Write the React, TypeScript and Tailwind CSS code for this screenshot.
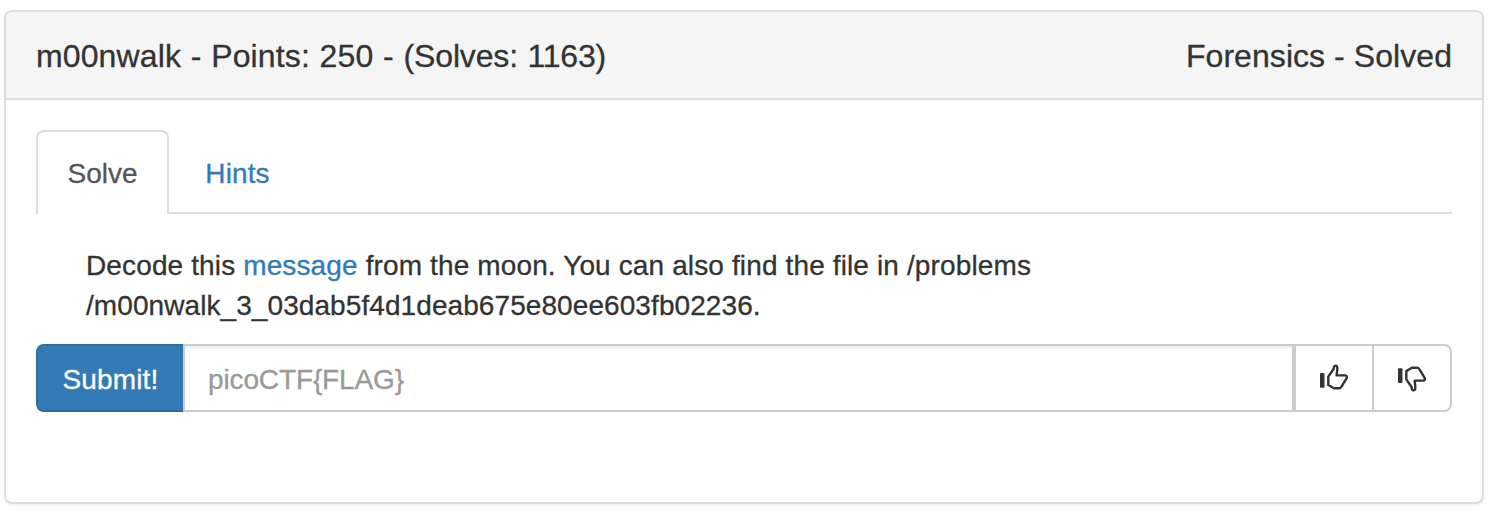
import { useState } from "react";

function Thumb({ down = false }: { down?: boolean }) {
  return (
    <svg width="30" height="28" viewBox="0 0 30 28" fill="none" className={down ? "-scale-y-100" : ""}>
      <rect x="1" y="9" width="4.5" height="14.7" rx="1" fill="#333" />
      <path
        d="M9.3 12.6 L14.6 5 L15.1 2.6 Q16.6 0.8 17.9 2.3 Q18.5 3.3 18.3 5.5 L17.6 11.4 H26.4 Q28.2 11.6 27.8 13.8 L22.8 22.2 Q21.8 24.2 20.2 24.2 H15 L12.4 22.7 L9.3 20.9 Z"
        stroke="#333"
        strokeWidth="2.4"
        strokeLinejoin="round"
      />
    </svg>
  );
}

export default function App() {
  const [flag, setFlag] = useState("");
  return (
    <div className="h-[518px] w-[1500px] bg-white pl-1 pt-[10px] font-['Liberation_Sans',Arial,sans-serif] text-[#333] [-webkit-text-stroke:0.3px]">
      <section className="h-[494px] w-[1480px] rounded-lg border-2 border-[#ddd] bg-white shadow-[0_2px_2px_rgba(0,0,0,0.05)]">
        <header className="flex h-[88px] items-center justify-between rounded-t-md border-b-2 border-[#ddd] bg-[#f5f5f5] px-[30px] pt-0.5 text-[32px]">
          <h3 className="whitespace-nowrap tracking-[0.12px] [word-spacing:0.7px]">
            m00nwalk - Points: 250 - <span className="tracking-[-0.15px]">(Solves: 1163)</span>
          </h3>
          <span className="whitespace-nowrap tracking-[0.06px]">Forensics - Solved</span>
        </header>
        <div className="px-[30px] pt-[30px] text-[28px]">
          <nav className="flex h-[84px] border-b-2 border-[#ddd]">
            <button className="h-[84px] w-[133px] rounded-t-lg border-2 border-b-0 border-[#ddd] bg-white pt-0.5 text-[#555]">Solve</button>
            <button className="h-[84px] w-[137px] pt-1 tracking-[0.1px] text-[#337ab7]">Hints</button>
          </nav>
          <p className="pl-[50px] pt-8 leading-10">
            <span className="whitespace-nowrap tracking-[0.13px]">
              Decode this <a href="#message" className="text-[#337ab7]">message</a> from the moon. You can also find the file in /problems
            </span>
            <br />
            <span className="whitespace-nowrap tracking-[0.08px]">/m00nwalk_3_03dab5f4d1deab675e80ee603fb02236.</span>
          </p>
          <form className="mt-[18px] flex h-[68px]" onSubmit={(e) => e.preventDefault()}>
            <button className="w-[147px] rounded-l-lg border-2 border-r-0 border-[#2e6da4] bg-[#337ab7] pt-[3px] tracking-[0.15px] text-white">Submit!</button>
            <input
              value={flag}
              onChange={(e) => setFlag(e.target.value)}
              placeholder="picoCTF{FLAG}"
              className="min-w-0 flex-1 border-2 border-[#ccc] pl-[23px] pt-[3px] tracking-[-0.13px] shadow-[inset_0_2px_2px_rgba(0,0,0,0.075)] outline-none placeholder:text-[#999]"
            />
            <button type="button" aria-label="Like" className="flex w-[80px] items-center justify-center border-2 border-[#ccc]"><Thumb /></button>
            <button type="button" aria-label="Dislike" className="flex w-[78px] items-center justify-center rounded-r-lg border-2 border-l-0 border-[#ccc]"><Thumb down /></button>
          </form>
        </div>
      </section>
    </div>
  );
}
